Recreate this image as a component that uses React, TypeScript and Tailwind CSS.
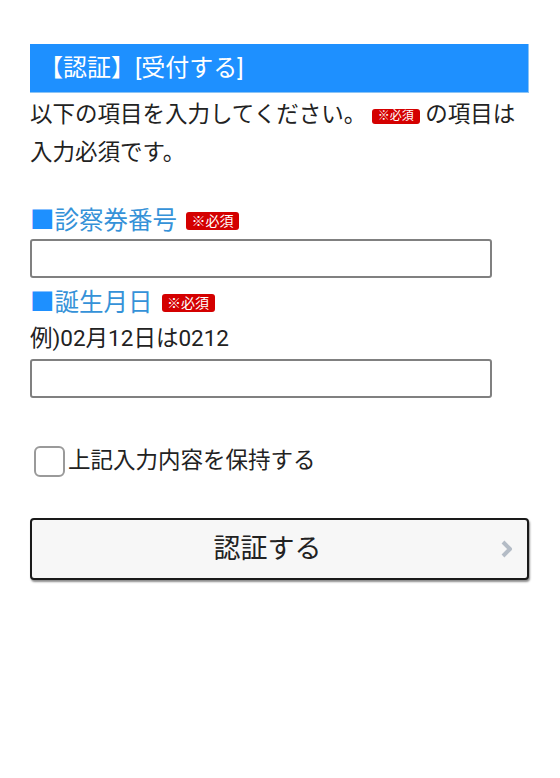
const Required = ({ size = 'sm' }: { size?: 'sm' | 'md' }): JSX.Element => (
  <span
    className={
      size === 'sm'
        ? 'inline-flex items-center justify-center h-[15px] w-[48px] rounded-[3px] bg-[#d40000] text-white text-[12px] leading-none align-[2px]'
        : 'inline-flex items-center justify-center h-[18px] w-[53px] rounded-[3px] bg-[#d40000] text-white text-[14px] leading-none align-[3px]'
    }
  >
    ※必須
  </span>
)

const FieldLabel = ({ label }: { label: string }): JSX.Element => (
  <div className="flex items-center h-[36px] text-[24.5px] text-[#3592d8]">
    <span className="text-[#1e90ff]">■</span>
    <span>{label}</span>
    <span className="ml-[9px] flex items-center">
      <Required size="md" />
    </span>
  </div>
)

const App = (): JSX.Element => {
  return (
    <div className="min-h-[778px] bg-white pl-[30px] pr-[31px] pt-[44px] font-['Roboto','Noto_Sans_CJK_JP',sans-serif] text-[#222]">
      <div className="h-[49px] bg-[#1e90ff] border-b border-r border-[#8cc4f5] flex items-center pl-[9px] text-[24px] text-white">
        【認証】[受付する]
      </div>

      <p className="mt-[2px] text-[22.5px] leading-[38px] text-[#222]">
        以下の項目を入力してください。 <Required /> の項目は
        <br />
        入力必須です。
      </p>

      <div className="mt-[32px]">
        <FieldLabel label="診察券番号" />
        <input
          type="text"
          className="block w-[462px] h-[39px] border-2 border-[#808080] rounded-[3px] bg-white"
        />
      </div>

      <div className="mt-[7px]">
        <FieldLabel label="誕生月日" />
        <div className="h-[36px] flex items-center text-[22.5px] text-[#222]">例)02月12日は0212</div>
        <input
          type="text"
          className="mt-[2px] block w-[462px] h-[39px] border-2 border-[#808080] rounded-[3px] bg-white"
        />
      </div>

      <label className="mt-[47px] flex items-center h-[32px] pl-[4px]">
        <span className="w-[31px] h-[31px] rounded-[6px] border-2 border-[#9a9a9a] bg-white" />
        <span className="ml-[3px] text-[22.5px] text-[#222]">上記入力内容を保持する</span>
      </label>

      <button
        type="button"
        className="mt-[41px] relative w-full h-[62px] rounded-[4px] border-2 border-[#1a1a1a] bg-[#f7f7f7] shadow-[1px_2px_2px_rgba(0,0,0,0.45)] flex items-center justify-center pr-[24px] text-[27px] text-[#222]"
      >
        認証する
        <svg
          className="absolute right-[14px] top-1/2 -translate-y-1/2"
          width="12"
          height="18"
          viewBox="0 0 12 18"
        >
          <path d="M2 2 L9 9 L2 16" fill="none" stroke="#b4bcc6" strokeWidth="4" strokeLinejoin="round" />
        </svg>
      </button>
    </div>
  )
}

export default App
